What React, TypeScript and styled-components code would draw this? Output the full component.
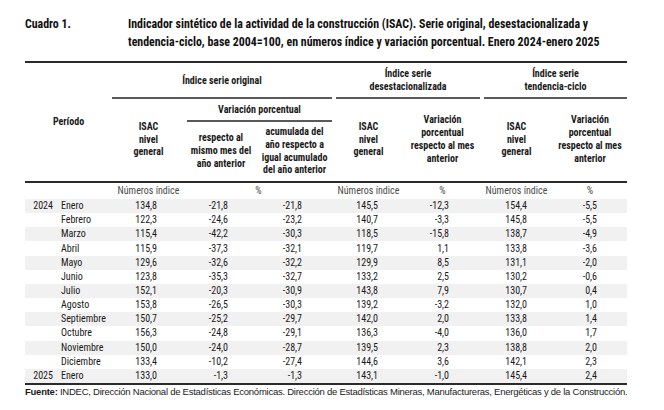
import React from "react";
import styled, { createGlobalStyle } from "styled-components";

type Row = { year?: string; month: string; values: string[] };

const rows: Row[] = [
  { year: "2024", month: "Enero", values: ["134,8", "-21,8", "-21,8", "145,5", "-12,3", "154,4", "-5,5"] },
  { month: "Febrero", values: ["122,3", "-24,6", "-23,2", "140,7", "-3,3", "145,8", "-5,5"] },
  { month: "Marzo", values: ["115,4", "-42,2", "-30,3", "118,5", "-15,8", "138,7", "-4,9"] },
  { month: "Abril", values: ["115,9", "-37,3", "-32,1", "119,7", "1,1", "133,8", "-3,6"] },
  { month: "Mayo", values: ["129,6", "-32,6", "-32,2", "129,9", "8,5", "131,1", "-2,0"] },
  { month: "Junio", values: ["123,8", "-35,3", "-32,7", "133,2", "2,5", "130,2", "-0,6"] },
  { month: "Julio", values: ["152,1", "-20,3", "-30,9", "143,8", "7,9", "130,7", "0,4"] },
  { month: "Agosto", values: ["153,8", "-26,5", "-30,3", "139,2", "-3,2", "132,0", "1,0"] },
  { month: "Septiembre", values: ["150,7", "-25,2", "-29,7", "142,0", "2,0", "133,8", "1,4"] },
  { month: "Octubre", values: ["156,3", "-24,8", "-29,1", "136,3", "-4,0", "136,0", "1,7"] },
  { month: "Noviembre", values: ["150,0", "-24,0", "-28,7", "139,5", "2,3", "138,8", "2,0"] },
  { month: "Diciembre", values: ["133,4", "-10,2", "-27,4", "144,6", "3,6", "142,1", "2,3"] },
  { year: "2025", month: "Enero", values: ["133,0", "-1,3", "-1,3", "143,1", "-1,0", "145,4", "2,4"] },
];

// right padding per data column, so figures line up like the source
const padRight = [28, 29, 30, 27, 31, 26, 30];
const colWidths = [32, 55, 73, 72, 75, 73, 75, 73, 74];

const GlobalStyle = createGlobalStyle`
  body {
    margin: 0;
    background: #ffffff;
    color: #1a1a1a;
  }
`;

const Page = styled.div`
  width: 664px;
  height: 410px;
  padding: 15px 0 0 25px;
  box-sizing: border-box;
  font-family: "Roboto Condensed", "Open Sans", sans-serif;
`;

const TitleBlock = styled.div`
  display: grid;
  grid-template-columns: 103px 1fr;
  font-weight: 700;
  font-size: 11.9px;
  line-height: 18px;
  color: #111;
  white-space: nowrap;
`;

const Table = styled.table`
  margin-top: 10px;
  width: 602px;
  border-collapse: collapse;
  table-layout: fixed;
  font-size: 10px;
  border-top: 2px solid #2b2b2b;
  border-bottom: 2px solid #2b2b2b;
`;

const HeadCell = styled.th<{ $h?: number }>`
  font-weight: 700;
  text-align: center;
  vertical-align: middle;
  line-height: 12.8px;
  padding: 0;
  white-space: nowrap;
  height: ${(p) => (p.$h ? `${p.$h}px` : "auto")};
`;

const GroupCell = styled.th<{ $pl: number }>`
  font-weight: 700;
  padding: 0 0 0 ${(p) => p.$pl}px;
  line-height: 13px;
  white-space: nowrap;
`;

const GroupLabel = styled.div<{ $h: number }>`
  height: ${(p) => p.$h}px;
  display: flex;
  align-items: center;
  justify-content: center;
  text-align: center;
  border-bottom: 2px solid #5a5a5a;
`;

const HeadRowLast = styled.tr`
  border-bottom: 2px solid #2b2b2b;
`;

const UnitCell = styled.td`
  color: #4a4a4a;
  text-align: center;
  height: 16px;
  padding: 0;
  line-height: 16px;
  white-space: nowrap;
`;

const DataRow = styled.tr<{ $striped: boolean }>`
  background: ${(p) => (p.$striped ? "#f1f1f1" : "transparent")};
`;

const YearCell = styled.td`
  text-align: right;
  padding: 0 4px 0 0;
  height: 14.16px;
  line-height: 14px;
`;

const MonthCell = styled.td`
  text-align: left;
  padding: 0 0 0 4px;
  line-height: 14px;
  white-space: nowrap;
`;

const NumCell = styled.td<{ $pr: number }>`
  text-align: right;
  padding: 0 ${(p) => p.$pr}px 0 0;
  line-height: 14px;
`;

const Source = styled.div`
  margin-top: 1px;
  font-family: "Liberation Sans", Arial, sans-serif;
  font-size: 9.5px;
  letter-spacing: -0.25px;
  line-height: 12px;
  color: #1a1a1a;
  white-space: nowrap;
  b {
    font-weight: 700;
  }
`;

const Br = () => <br />;

export default function App() {
  return (
    <>
      <GlobalStyle />
      <Page>
        <TitleBlock>
          <span>Cuadro 1.</span>
          <span>
            Indicador sintético de la actividad de la construcción (ISAC). Serie original, desestacionalizada y
            <Br />
            tendencia-ciclo, base 2004=100, en números índice y variación porcentual. Enero 2024-enero 2025
          </span>
        </TitleBlock>
        <Table>
          <colgroup>
            {colWidths.map((w, i) => (
              <col key={i} style={{ width: w }} />
            ))}
          </colgroup>
          <thead>
            <tr>
              <HeadCell colSpan={2} rowSpan={3}>
                Período
              </HeadCell>
              <GroupCell colSpan={3} $pl={0}>
                <GroupLabel $h={34}>Índice serie original</GroupLabel>
              </GroupCell>
              <GroupCell colSpan={2} $pl={4}>
                <GroupLabel $h={34}>
                  Índice serie
                  <Br />
                  desestacionalizada
                </GroupLabel>
              </GroupCell>
              <GroupCell colSpan={2} $pl={4}>
                <GroupLabel $h={34}>
                  Índice serie
                  <Br />
                  tendencia-ciclo
                </GroupLabel>
              </GroupCell>
            </tr>
            <tr>
              <HeadCell rowSpan={2}>
                ISAC
                <Br />
                nivel
                <Br />
                general
              </HeadCell>
              <GroupCell colSpan={2} $pl={2}>
                <GroupLabel $h={21}>Variación porcentual</GroupLabel>
              </GroupCell>
              <HeadCell rowSpan={2}>
                ISAC
                <Br />
                nivel
                <Br />
                general
              </HeadCell>
              <HeadCell rowSpan={2}>
                Variación
                <Br />
                porcentual
                <Br />
                respecto al mes
                <Br />
                anterior
              </HeadCell>
              <HeadCell rowSpan={2}>
                ISAC
                <Br />
                nivel
                <Br />
                general
              </HeadCell>
              <HeadCell rowSpan={2}>
                Variación
                <Br />
                porcentual
                <Br />
                respecto al mes
                <Br />
                anterior
              </HeadCell>
            </tr>
            <HeadRowLast>
              <HeadCell $h={59}>
                respecto al
                <Br />
                mismo mes del
                <Br />
                año anterior
              </HeadCell>
              <HeadCell $h={59}>
                acumulada del
                <Br />
                año respecto a
                <Br />
                igual acumulado
                <Br />
                del año anterior
              </HeadCell>
            </HeadRowLast>
          </thead>
          <tbody>
            <tr>
              <UnitCell colSpan={2} />
              <UnitCell>Números índice</UnitCell>
              <UnitCell colSpan={2}>%</UnitCell>
              <UnitCell>Números índice</UnitCell>
              <UnitCell>%</UnitCell>
              <UnitCell>Números índice</UnitCell>
              <UnitCell>%</UnitCell>
            </tr>
            {rows.map((r, i) => (
              <DataRow key={i} $striped={i % 2 === 0}>
                <YearCell>{r.year ?? ""}</YearCell>
                <MonthCell>{r.month}</MonthCell>
                {r.values.map((v, j) => (
                  <NumCell key={j} $pr={padRight[j]}>
                    {v}
                  </NumCell>
                ))}
              </DataRow>
            ))}
          </tbody>
        </Table>
        <Source>
          <b>Fuente:</b> INDEC, Dirección Nacional de Estadísticas Económicas. Dirección de Estadísticas Mineras,
          Manufactureras, Energéticas y de la Construcción.
        </Source>
      </Page>
    </>
  );
}
